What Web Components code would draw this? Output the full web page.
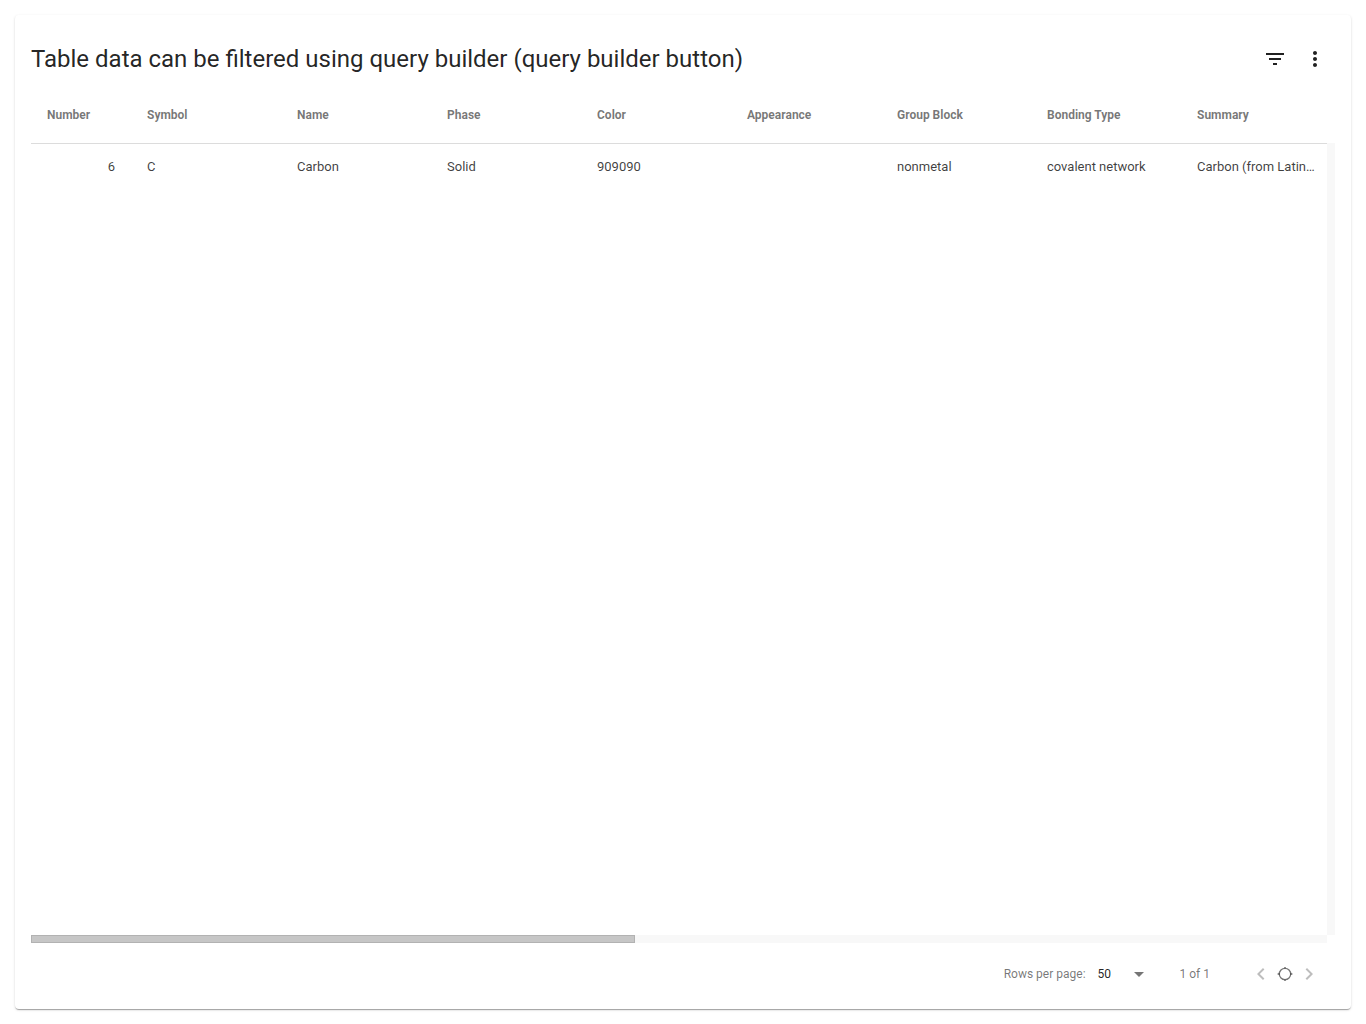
<!DOCTYPE html>
<html lang="en">
<head>
<meta charset="utf-8">
<title>Elements table</title>
<style>
  html, body { margin: 0; }
  body {
    background: #fff;
    font-family: Roboto, "Liberation Sans", sans-serif;
    color: rgba(0, 0, 0, .87);
    box-sizing: border-box;
    height: 100vh;
    padding: 15px;
    display: flex;
    flex-direction: column;
  }
</style>
</head>
<body>
<table-card>
  <card-toolbar slot="header">Table data can be filtered using query builder (query builder button)</card-toolbar>
  <data-grid></data-grid>
  <table-pager slot="footer"></table-pager>
</table-card>
<script>
  const define = (name, markup, setup) => customElements.define(name, class extends HTMLElement {
    constructor() {
      super();
      this.attachShadow({ mode: 'open' }).innerHTML = markup;
      if (setup) setup(this.shadowRoot);
    }
  });

  define('icon-button', `
    <style>
      :host { display: block; }
      button {
        display: flex; align-items: center; justify-content: center;
        width: var(--size, 40px); height: var(--size, 40px);
        padding: 0; border: 0; border-radius: 50%; background: none;
        color: inherit; cursor: pointer;
      }
      ::slotted(svg) { display: block; width: 24px; height: 24px; fill: currentColor; }
    </style>
    <button type="button"><slot></slot></button>`);
  const labelButtons = root => root.querySelectorAll('icon-button').forEach(b =>
    b.shadowRoot.querySelector('button').setAttribute('aria-label', b.dataset.label));

  define('card-toolbar', `
    <style>
      :host { display: flex; align-items: center; min-height: 56px; }
      h1 { flex: 1; margin: 0; font-size: 24px; line-height: 32px; font-weight: 400; }
    </style>
    <h1><slot></slot></h1>
    <icon-button data-label="Query builder"><svg viewBox="0 0 24 24"><path d="M10 18h4v-2h-4v2zM3 6v2h18V6H3zm3 7h12v-2H6v2z"/></svg></icon-button>
    <icon-button data-label="More"><svg viewBox="0 0 24 24"><path d="M12 8c1.100 0 2-.9 2-2s-.9-2-2-2-2 .9-2 2 .9 2 2 2zm0 2c-1.100 0-2 .9-2 2s.9 2 2 2 2-.9 2-2-.9-2-2-2zm0 6c-1.100 0-2 .9-2 2s.9 2 2 2 2-.9 2-2-.9-2-2-2z"/></svg></icon-button>`,
    labelButtons);

  define('scroll-track', `
    <style>
      :host { display: flex; background: #f8f8f8; }
      .thumb { box-sizing: border-box; width: var(--thumb, 0); background: #c6c6c6; border: 1px solid #b2b2b2; }
      :host([empty]) .thumb { display: none; }
    </style>
    <div class="thumb"></div>`);

  const columns = ['Number', 'Symbol', 'Name', 'Phase', 'Color', 'Appearance', 'Group Block', 'Bonding Type', 'Summary'];
  const rows = [['6', 'C', 'Carbon', 'Solid', '909090', '', 'nonmetal', 'covalent network', 'Carbon (from Latin: carbo "coal") is a chemical element']];

  define('data-grid', `
    <style>
      :host { flex: 1; display: grid; grid-template: 56px 1fr 8px / 1fr 8px; min-height: 0; }
      .view { grid-area: 1 / 1 / 3 / 2; overflow: hidden; }
      table { table-layout: fixed; width: 1300px; border-collapse: separate; border-spacing: 0; text-align: left; }
      .first { width: 100px; }
      th, td { box-sizing: border-box; padding: 0 16px; white-space: nowrap; overflow: hidden; text-overflow: ellipsis; }
      th { height: 57px; font-size: 12px; font-weight: 700; color: rgba(0, 0, 0, .54); border-bottom: 1px solid #dcdcdc; }
      td { height: 44px; font-size: 13px; color: rgba(0, 0, 0, .76); }
      td:first-child { text-align: right; }
      .v { grid-area: 2 / 2; }
      .h { grid-area: 3 / 1; --thumb: 46.6%; }
    </style>
    <div class="view"><table>
      <colgroup><col class="first">${'<col>'.repeat(8)}</colgroup>
      <thead><tr>${columns.map(c => `<th scope="col">${c}</th>`).join('')}</tr></thead>
      <tbody>${rows.map(r => `<tr>${r.map(c => `<td>${c}</td>`).join('')}</tr>`).join('')}</tbody>
    </table></div>
    <scroll-track class="v" empty></scroll-track>
    <scroll-track class="h"></scroll-track>`);

  define('table-pager', `
    <style>
      :host { display: flex; align-items: center; justify-content: flex-end; height: 62px; padding-right: 14px; font-size: 12px; color: rgba(0, 0, 0, .54); }
      .size { display: grid; align-items: center; width: 48px; margin: 0 34px 0 12px; }
      select { grid-area: 1 / 1; appearance: none; width: 100%; margin: 0; padding: 0; border: 0; background: none; font: inherit; color: rgba(0, 0, 0, .87); }
      .size svg { grid-area: 1 / 1; justify-self: end; width: 10px; height: 5px; margin-right: 2px; fill: currentColor; pointer-events: none; }
      .nav { display: flex; margin-left: 39px; --size: 24px; }
      .off { color: rgba(0, 0, 0, .26); }
    </style>
    <label for="size">Rows per page:</label>
    <span class="size">
      <select id="size"><option>50</option><option>100</option></select>
      <svg viewBox="0 0 10 5"><path d="M0 0h10L5 5z"/></svg>
    </span>
    <span>1 of 1</span>
    <div class="nav">
      <icon-button class="off" data-label="Previous page"><svg viewBox="0 0 24 24"><path d="M15.410 7.410L14 6l-6 6 6 6 1.410-1.410L10.830 12z"/></svg></icon-button>
      <icon-button data-label="Current page"><svg viewBox="0 0 24 24"><circle cx="12" cy="12" r="5.700" fill="none" stroke="currentColor" stroke-width="1.300"/><path d="M4.600 11.300h2v1.400h-2zM17.400 11.300h2v1.400h-2zM11.300 5h1.400v1.300h-1.400zM11.300 17.700h1.400V19h-1.400z"/></svg></icon-button>
      <icon-button class="off" data-label="Next page"><svg viewBox="0 0 24 24"><path d="M10 6L8.590 7.410 13.170 12l-4.580 4.590L10 18l6-6z"/></svg></icon-button>
    </div>`, labelButtons);

  define('table-card', `
    <style>
      :host {
        flex: 1; min-height: 0; display: flex; flex-direction: column;
        padding: 16px 16px 4px; border-radius: 4px; background: #fff;
        box-shadow: 0 2px 1px -1px rgba(0, 0, 0, .2), 0 1px 1px 0 rgba(0, 0, 0, .14), 0 1px 3px 0 rgba(0, 0, 0, .12);
      }
    </style>
    <slot name="header"></slot>
    <slot></slot>
    <slot name="footer"></slot>`);
</script>
</body>
</html>
